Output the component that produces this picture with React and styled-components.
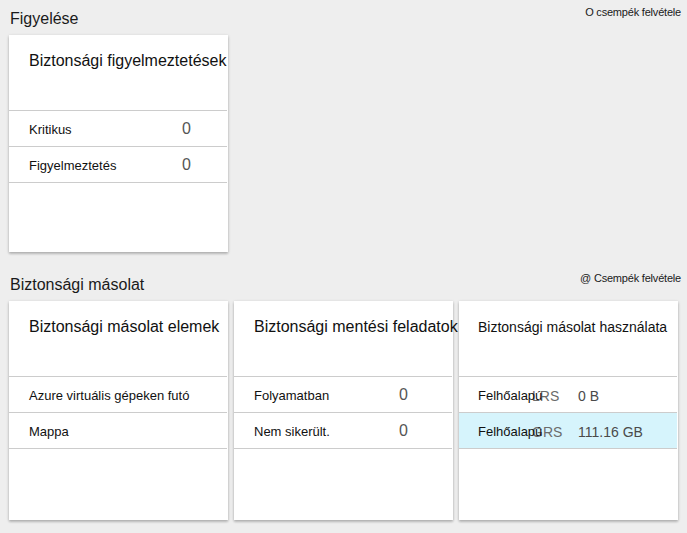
import React from 'react';
import styled, { createGlobalStyle } from 'styled-components';

const GlobalStyle = createGlobalStyle`
    html, body {
        margin: 0;
        background: #eeeeee;
    }
    body {
        font-family: "Liberation Sans", Arial, sans-serif;
        color: #1a1a1a;
    }
`

const Page = styled.div`
    display: flex;
    flex-direction: column;
    gap: 19px;
    padding: 5px 8px 12px 9px;
`

const Section = styled.section`
    display: flex;
    flex-direction: column;
    gap: 6px;
`

const SectionHeader = styled.div`
    display: flex;
    justify-content: space-between;
    align-items: flex-start;
`

const SectionTitle = styled.h2`
    margin: 4px 0 0 1px;
    font-size: 16px;
    line-height: 20px;
    font-weight: 400;
    color: #1a1a1a;
`

const AddTiles = styled.button`
    margin: 0 -2px 0 0;
    padding: 0;
    border: 0;
    background: none;
    font-family: inherit;
    font-size: 11px;
    line-height: 15px;
    letter-spacing: -0.2px;
    color: #1a1a1a;
    cursor: pointer;
`

const Tiles = styled.div`
    display: flex;
    gap: 6px;
`

const Card = styled.div`
    width: 219px;
    height: ${p => p.$height}px;
    box-sizing: border-box;
    display: flex;
    flex-direction: column;
    background: #ffffff;
    box-shadow: 0 1px 3px rgba(0, 0, 0, 0.22), 0 2px 2px rgba(0, 0, 0, 0.12);
`

const CardHeader = styled.div`
    height: 75px;
    box-sizing: border-box;
    padding: 16px 0 0 ${p => p.$indent}px;
`

const CardTitle = styled.h3`
    margin: 0;
    font-size: ${p => p.$size}px;
    line-height: 20px;
    font-weight: 400;
    white-space: nowrap;
    color: #111;
`

const Rows = styled.div`
    margin-right: 1px;
    border-bottom: 1px solid #cccccc;
`

const Row = styled.div`
    display: grid;
    grid-template-columns: ${p => p.$cols};
    align-items: center;
    height: 36px;
    box-sizing: border-box;
    padding: 2px 0 0 ${p => p.$indent}px;
    border-top: 1px solid #cccccc;
    background: ${p => (p.$selected ? '#d6f4fc' : 'transparent')};
    white-space: nowrap;
`

const Label = styled.span`
    min-width: 0;
    font-size: 13px;
    color: #111;
    position: relative;
    z-index: 1;
`

const Redundancy = styled.span`
    min-width: 0;
    font-size: 14px;
    color: #6b6b6b;
`

const Value = styled.span`
    min-width: 0;
    font-size: ${p => (p.$small ? 14 : 16)}px;
    color: ${p => (p.$small ? '#4a4a4a' : '#555')};
    margin-top: ${p => (p.$small ? 0 : -2)}px;
`

function Tile({ title, titleSize = 16, height, cols, indent = 20, rows }) {
    return (
        <Card $height={height}>
            <CardHeader $indent={indent}>
                <CardTitle $size={titleSize}>{title}</CardTitle>
            </CardHeader>
            <Rows>
                {rows.map((r, i) => (
                    <Row key={i} $cols={cols} $indent={indent} $selected={r.selected}>
                        <Label>{r.label}</Label>
                        {r.kind !== undefined && <Redundancy>{r.kind}</Redundancy>}
                        {r.value !== undefined && <Value $small={r.kind !== undefined}>{r.value}</Value>}
                    </Row>
                ))}
            </Rows>
        </Card>
    )
}

function App() {
    return (
        <>
            <GlobalStyle />
            <Page>
                <Section>
                    <SectionHeader>
                        <SectionTitle>Figyelése</SectionTitle>
                        <AddTiles>O csempék felvétele</AddTiles>
                    </SectionHeader>
                    <Tiles>
                        <Tile
                            title="Biztonsági figyelmeztetések"
                            height={217}
                            cols="153px auto"
                            rows={[
                                { label: 'Kritikus', value: '0' },
                                { label: 'Figyelmeztetés', value: '0' },
                            ]}
                        />
                    </Tiles>
                </Section>
                <Section>
                    <SectionHeader>
                        <SectionTitle>Biztonsági másolat</SectionTitle>
                        <AddTiles>@ Csempék felvétele</AddTiles>
                    </SectionHeader>
                    <Tiles>
                        <Tile
                            title="Biztonsági másolat elemek"
                            height={219}
                            cols="1fr"
                            rows={[
                                { label: 'Azure virtuális gépeken futó' },
                                { label: 'Mappa' },
                            ]}
                        />
                        <Tile
                            title="Biztonsági mentési feladatok"
                            height={219}
                            cols="145px auto"
                            rows={[
                                { label: 'Folyamatban', value: '0' },
                                { label: 'Nem sikerült.', value: '0' },
                            ]}
                        />
                        <Tile
                            title="Biztonsági másolat használata"
                            titleSize={14}
                            height={219}
                            indent={19}
                            cols="54px 46px auto"
                            rows={[
                                { label: 'Felhőalapú', kind: 'LRS', value: '0 B' },
                                { label: 'Felhőalapú', kind: 'GRS', value: '111.16 GB', selected: true },
                            ]}
                        />
                    </Tiles>
                </Section>
            </Page>
        </>
    )
}

export default App;
